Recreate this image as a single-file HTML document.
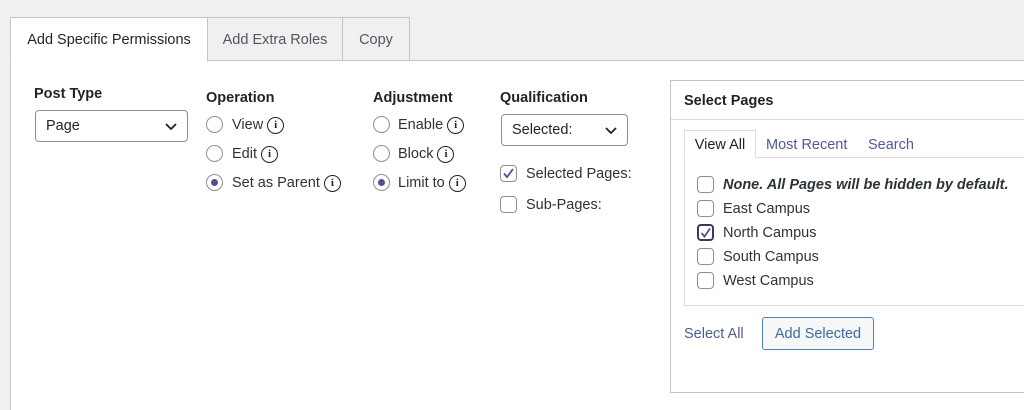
<!DOCTYPE html>
<html style="height:410px;overflow:hidden"><head><style>
*{box-sizing:border-box;margin:0;padding:0}
body{width:1024px;height:410px;background:#f0f0f1;font-family:"Liberation Sans",sans-serif;color:#1d2327;position:relative;overflow:hidden;font-size:14.5px}
.a{position:absolute;white-space:nowrap}
.tab{position:absolute;top:17px;height:44px;border:1px solid #c3c4c7;background:#f0f0f1;color:#50575e;font-size:14.5px;line-height:44px;text-align:center}
.main{position:absolute;left:10px;top:60px;width:1020px;height:360px;background:#fff;border:1px solid #c3c4c7}
h4{position:absolute;font-size:14.5px;font-weight:bold;color:#1d2327}
.sel{position:absolute;height:32px;border:1px solid #8c8f94;border-radius:4px;background:#fff;font-size:14.5px;line-height:31px;padding-left:10px}
.sel svg{position:absolute;right:9px;top:11px}
.rad{position:absolute;width:17px;height:17px;border:1px solid #8c8f94;border-radius:50%;background:#fff}
.rad.on::after{content:"";position:absolute;left:4px;top:4px;width:7px;height:7px;border-radius:50%;background:#5b4a93}
.cb{position:absolute;width:17px;height:17px;border:1px solid #8c8f94;border-radius:4px;background:#fff}
.lbl{position:absolute;font-size:14.5px;line-height:18px;color:#2c3338;white-space:nowrap;display:flex;align-items:center}
.i{display:block;width:17px;height:17px;border:1.6px solid #1d2327;border-radius:50%;margin-left:4px;text-align:center;font:bold 11px/14px "Liberation Serif",serif;color:#1d2327}
.link{color:#4f5b93}
</style></head><body>
<div class="main"></div>
<div class="tab" style="left:10px;width:198px;background:#fff;color:#1d2327;border-bottom-color:#fff;height:45px">Add Specific Permissions</div>
<div class="tab" style="left:207px;width:136px">Add Extra Roles</div>
<div class="tab" style="left:342px;width:68px">Copy</div>

<h4 style="left:34px;top:86px">Post Type</h4>
<div class="sel" style="left:35px;top:110px;width:153px">Page<svg width="14" height="9" viewBox="0 0 14 9"><path d="M2 2l5 5 5-5" fill="none" stroke="#1d2327" stroke-width="1.8"/></svg></div>

<h4 style="left:206px;top:90px">Operation</h4>
<div class="rad" style="left:206px;top:116px"></div><div class="lbl" style="left:232px;top:116px">View<span class="i">i</span></div>
<div class="rad" style="left:206px;top:145px"></div><div class="lbl" style="left:232px;top:145px">Edit<span class="i">i</span></div>
<div class="rad on" style="left:206px;top:174px"></div><div class="lbl" style="left:232px;top:174px">Set as Parent<span class="i">i</span></div>

<h4 style="left:373px;top:90px">Adjustment</h4>
<div class="rad" style="left:373px;top:116px"></div><div class="lbl" style="left:398px;top:116px">Enable<span class="i">i</span></div>
<div class="rad" style="left:373px;top:145px"></div><div class="lbl" style="left:398px;top:145px">Block<span class="i">i</span></div>
<div class="rad on" style="left:373px;top:174px"></div><div class="lbl" style="left:398px;top:174px">Limit to<span class="i">i</span></div>

<h4 style="left:500px;top:90px">Qualification</h4>
<div class="sel" style="left:501px;top:114px;width:127px">Selected:<svg width="14" height="9" viewBox="0 0 14 9"><path d="M2 2l5 5 5-5" fill="none" stroke="#1d2327" stroke-width="1.8"/></svg></div>
<div class="cb" style="left:500px;top:165px"><svg width="15" height="15" viewBox="0 0 15 15"><path d="M3 7.5l3 3.5 6-8" fill="none" stroke="#5b4a93" stroke-width="1.8"/></svg></div><div class="lbl" style="left:526px;top:165px">Selected Pages:</div>
<div class="cb" style="left:500px;top:196px"></div><div class="lbl" style="left:526px;top:196px">Sub-Pages:</div>

<div class="a" style="left:670px;top:80px;width:360px;height:313px;border:1px solid #c3c4c7;background:#fff"></div>
<div class="a" style="left:671px;top:119px;width:360px;border-top:1px solid #dcdcde"></div>
<h4 style="left:684px;top:93px">Select Pages</h4>
<div class="a" style="left:684px;top:157px;width:345px;height:149px;border:1px solid #dcdcde"></div>
<div class="a" style="left:684px;top:130px;width:72px;height:28px;border:1px solid #dcdcde;border-bottom-color:#fff;background:#fff;text-align:center;line-height:28px">View All</div>
<div class="lbl link" style="left:766px;top:136px">Most Recent</div>
<div class="lbl link" style="left:868px;top:136px">Search</div>
<div class="cb" style="left:697px;top:176px"></div><div class="lbl" style="left:723px;top:176px;font-weight:bold;font-style:italic">None. All Pages will be hidden by default.</div>
<div class="cb" style="left:697px;top:200px"></div><div class="lbl" style="left:723px;top:200px">East Campus</div>
<div class="cb" style="left:697px;top:224px;border:2px solid #3c3a5c"><svg width="14" height="14" viewBox="0 0 14 14"><path d="M2.5 7l3 3.5 5.5-8" fill="none" stroke="#5b4a93" stroke-width="1.8"/></svg></div><div class="lbl" style="left:723px;top:224px">North Campus</div>
<div class="cb" style="left:697px;top:248px"></div><div class="lbl" style="left:723px;top:248px">South Campus</div>
<div class="cb" style="left:697px;top:272px"></div><div class="lbl" style="left:723px;top:272px">West Campus</div>
<div class="lbl link" style="left:684px;top:325px">Select All</div>
<div class="a" style="left:762px;top:317px;width:112px;height:33px;border:1px solid #4f7fb8;border-radius:3px;background:#f6f7f7;color:#3d6aa0;text-align:center;line-height:32px">Add Selected</div>
</body></html>
